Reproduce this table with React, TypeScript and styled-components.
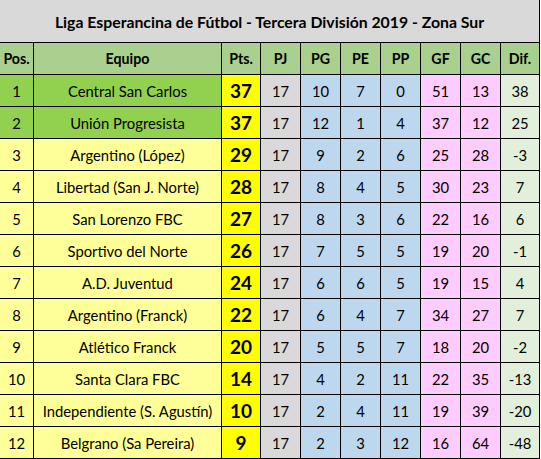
import React from "react";
import styled, { createGlobalStyle } from "styled-components";

const Global = createGlobalStyle`
  html, body { margin: 0; padding: 0; background: #ffffff; }
  body { font-family: "Lato", "Liberation Sans", sans-serif; color: #000; }
`;

const Page = styled.div`
  width: 541px;
  height: 459px;
  background: #ffffff;
  overflow: hidden;
`;

const Sheet = styled.div`
  width: 539px;
  border-right: 1px solid #000;
  border-bottom: 1px solid #000;
`;

const Title = styled.div`
  height: 42px;
  background: #d9d9d9;
  border-bottom: 1px solid #000;
  display: flex;
  align-items: center;
  justify-content: center;
  font-weight: 700;
  font-size: 15.8px;
`;

const Grid = styled.div`
  display: grid;
  grid-template-columns: 33px 187px 38px 39px 39px 39px 39px 39px 39px 38px;
  grid-auto-rows: 31px;
  gap: 1px;
  background: #000;
`;

type CellProps = { $bg: string; $bold?: boolean; $size?: number };

const Cell = styled.div<CellProps>`
  background: ${(p) => p.$bg};
  display: flex;
  align-items: center;
  justify-content: center;
  font-size: ${(p) => p.$size ?? 14.8}px;
  font-weight: ${(p) => (p.$bold ? 700 : 400)};
  white-space: nowrap;
  overflow: hidden;
`;

const C = {
  header: "#a9d08e",
  promo: "#92d050",
  rest: "#ffff99",
  pts: "#ffff00",
  pj: "#d9d9d9",
  blue: "#bdd7ee",
  pink: "#ffccff",
  dif: "#e2efda",
};

const headers = ["Pos.", "Equipo", "Pts.", "PJ", "PG", "PE", "PP", "GF", "GC", "Dif."];

type Row = [number, string, number, number, number, number, number, number, number, number];

const rows: Row[] = [
  [1, "Central San Carlos", 37, 17, 10, 7, 0, 51, 13, 38],
  [2, "Unión Progresista", 37, 17, 12, 1, 4, 37, 12, 25],
  [3, "Argentino (López)", 29, 17, 9, 2, 6, 25, 28, -3],
  [4, "Libertad (San J. Norte)", 28, 17, 8, 4, 5, 30, 23, 7],
  [5, "San Lorenzo FBC", 27, 17, 8, 3, 6, 22, 16, 6],
  [6, "Sportivo del Norte", 26, 17, 7, 5, 5, 19, 20, -1],
  [7, "A.D. Juventud", 24, 17, 6, 6, 5, 19, 15, 4],
  [8, "Argentino (Franck)", 22, 17, 6, 4, 7, 34, 27, 7],
  [9, "Atlético Franck", 20, 17, 5, 5, 7, 18, 20, -2],
  [10, "Santa Clara FBC", 14, 17, 4, 2, 11, 22, 35, -13],
  [11, "Independiente (S. Agustín)", 10, 17, 2, 4, 11, 19, 39, -20],
  [12, "Belgrano (Sa Pereira)", 9, 17, 2, 3, 12, 16, 64, -48],
];

export default function App() {
  return (
    <Page>
      <Global />
      <Sheet>
        <Title>Liga Esperancina de Fútbol - Tercera División 2019 - Zona Sur</Title>
        <Grid>
          {headers.map((h) => (
            <Cell key={h} $bg={C.header} $bold $size={14.2}>
              {h}
            </Cell>
          ))}
          {rows.map((r) => {
            const base = r[0] <= 2 ? C.promo : C.rest;
            return (
              <React.Fragment key={r[0]}>
                <Cell $bg={base}>{r[0]}</Cell>
                <Cell $bg={base}>{r[1]}</Cell>
                <Cell $bg={C.pts} $bold $size={19}>{r[2]}</Cell>
                <Cell $bg={C.pj}>{r[3]}</Cell>
                <Cell $bg={C.blue}>{r[4]}</Cell>
                <Cell $bg={C.blue}>{r[5]}</Cell>
                <Cell $bg={C.blue}>{r[6]}</Cell>
                <Cell $bg={C.pink}>{r[7]}</Cell>
                <Cell $bg={C.pink}>{r[8]}</Cell>
                <Cell $bg={C.dif}>{r[9]}</Cell>
              </React.Fragment>
            );
          })}
        </Grid>
      </Sheet>
    </Page>
  );
}
